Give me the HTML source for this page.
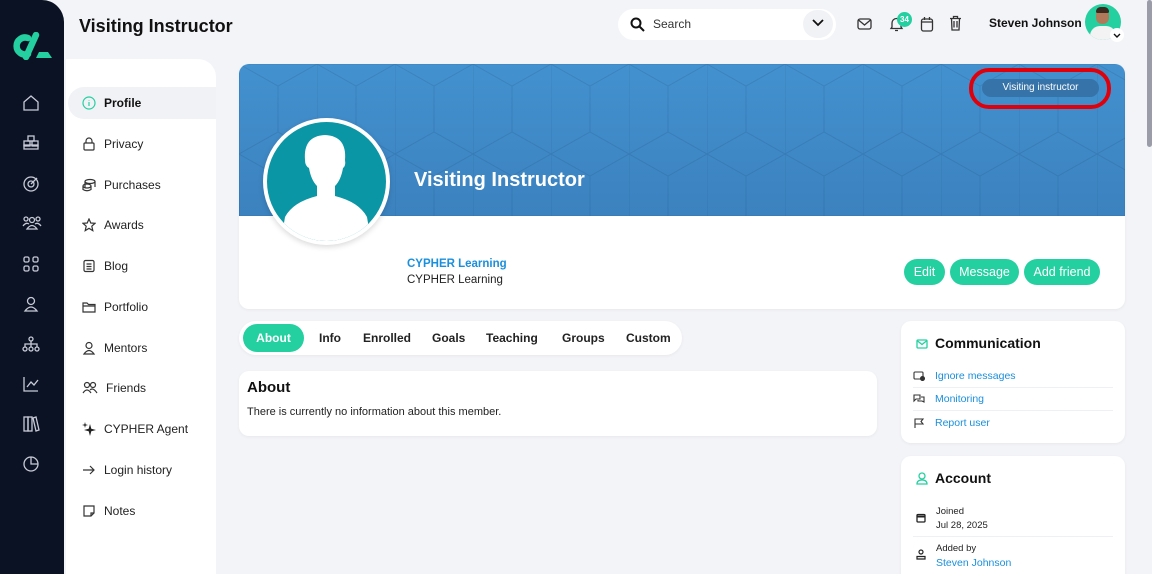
<!DOCTYPE html>
<html><head><meta charset="utf-8"><style>
*{box-sizing:border-box;margin:0;padding:0}
html,body{width:1152px;height:574px;overflow:hidden}
body{background:#f3f4f8;font-family:"Liberation Sans",sans-serif;color:#111;position:relative}
.abs{position:absolute}
.side{left:0;top:0;width:64px;height:574px;background:#0b1224;border-top-right-radius:22px}
.side svg{position:absolute;left:22px}
.nav{left:66px;top:59px;width:150px;height:515px;background:#fff;border-top-right-radius:18px}
.ni{position:absolute;left:2px;width:148px;height:32px;display:flex;align-items:center;padding-left:14px;font-size:12px;color:#222}
.ni svg{margin-right:8px}
.ni.act{background:#f1f2f6;border-radius:16px 0 0 16px;font-weight:bold;color:#111}
.card{background:#fff;border-radius:10px;box-shadow:0 1px 3px rgba(0,0,0,.05)}
.btn{position:absolute;top:259px;height:26px;border-radius:13px;background:#25d0a0;color:#fff;font-size:12.5px;display:flex;align-items:center;justify-content:center}
.tab{position:absolute;top:331px;font-size:12px;font-weight:bold;color:#222}
.lnk{color:#1a8fdc;font-size:10.5px}
.row{position:absolute;left:12px;right:12px;display:flex;align-items:center;height:23px;border-bottom:1px solid #eef0f4}
.row svg{margin-right:10px}
</style></head><body>
<div class="abs side">
 <svg style="left:11px;top:32px" width="42" height="28" viewBox="0 0 42 28"><path d="M17 6 A8.5 8.5 0 1 0 17 22" stroke="#25d0a0" stroke-width="6.5" fill="none" stroke-linecap="round"/><path d="M25 3 L15 25" stroke="#25d0a0" stroke-width="6.5" stroke-linecap="round"/><path d="M25 26 L41 26 L37 20 L28 20Z" fill="#25d0a0"/></svg>
 <svg style="top:95px" width="18" height="16" viewBox="0 0 18 16" fill="none" stroke="#c8cbd6" stroke-width="1.3"><path d="M2 7 L9 1 L16 7 V15 H2Z"/></svg>
 <svg style="top:135px" width="18" height="16" viewBox="0 0 18 16" fill="none" stroke="#c8cbd6" stroke-width="1.3"><rect x="6" y="1" width="6" height="5"/><rect x="2" y="6" width="6" height="5"/><rect x="10" y="6" width="6" height="5"/><rect x="2" y="10" width="14" height="4"/></svg>
 <svg style="top:175px" width="18" height="18" viewBox="0 0 18 18" fill="none" stroke="#c8cbd6" stroke-width="1.3"><circle cx="9" cy="9" r="7"/><circle cx="9" cy="9" r="3"/><path d="M9 9 L15 3"/></svg>
 <svg style="top:215px" width="20" height="16" viewBox="0 0 20 16" fill="none" stroke="#c8cbd6" stroke-width="1.3"><circle cx="10" cy="5" r="2.5"/><circle cx="4" cy="4" r="2"/><circle cx="16" cy="4" r="2"/><path d="M5 14 Q10 7 15 14Z M1 11 Q4 7 7 9 M19 11 Q16 7 13 9"/></svg>
 <svg style="top:255px" width="18" height="18" viewBox="0 0 18 18" fill="none" stroke="#c8cbd6" stroke-width="1.3"><rect x="2" y="2" width="5" height="5" rx="1.5"/><rect x="11" y="2" width="5" height="5" rx="1.5"/><rect x="2" y="11" width="5" height="5" rx="1.5"/><rect x="11" y="11" width="5" height="5" rx="1.5"/></svg>
 <svg style="top:295px" width="18" height="18" viewBox="0 0 18 18" fill="none" stroke="#c8cbd6" stroke-width="1.3"><circle cx="9" cy="6" r="3.5"/><path d="M3 16 Q9 8 15 16Z"/></svg>
 <svg style="top:335px" width="18" height="18" viewBox="0 0 18 18" fill="none" stroke="#c8cbd6" stroke-width="1.3"><circle cx="9" cy="4" r="2"/><circle cx="3" cy="14" r="2"/><circle cx="9" cy="14" r="2"/><circle cx="15" cy="14" r="2"/><path d="M9 6 V12 M3 12 V9 H15 V12"/></svg>
 <svg style="top:375px" width="18" height="18" viewBox="0 0 18 18" fill="none" stroke="#c8cbd6" stroke-width="1.3"><path d="M2 2 V16 H16 M5 12 L9 7 L12 10 L16 5"/></svg>
 <svg style="top:415px" width="18" height="18" viewBox="0 0 18 18" fill="none" stroke="#c8cbd6" stroke-width="1.3"><rect x="2" y="2" width="4" height="14"/><rect x="6" y="2" width="4" height="14"/><path d="M11 3 L14 2 L17 15 L14 16Z"/></svg>
 <svg style="top:455px" width="18" height="18" viewBox="0 0 18 18" fill="none" stroke="#c8cbd6" stroke-width="1.3"><circle cx="9" cy="9" r="7"/><path d="M9 2 V9 H16"/></svg>
</div>
<div class="abs" style="left:79px;top:16px;font-size:18px;font-weight:bold">Visiting Instructor</div>
<div class="abs nav">
 <div class="ni act" style="top:28px"><svg width="14" height="14" viewBox="0 0 14 14" fill="none" stroke="#25d0a0" stroke-width="1.2"><circle cx="7" cy="7" r="6"/><path d="M7 6 V10 M7 4 V4.5"/></svg>Profile</div>
 <div class="ni" style="top:69px"><svg width="14" height="14" viewBox="0 0 14 14" fill="none" stroke="#333" stroke-width="1.2"><rect x="2" y="6" width="10" height="7" rx="1"/><path d="M4 6 V4 A3 3 0 0 1 10 4 V6"/></svg>Privacy</div>
 <div class="ni" style="top:110px"><svg width="14" height="14" viewBox="0 0 14 14" fill="none" stroke="#333" stroke-width="1.2"><ellipse cx="8" cy="3.5" rx="5" ry="2"/><path d="M3 3.5 V10 M13 3.5V9"/><ellipse cx="5" cy="8" rx="4" ry="2"/><path d="M1 8 V11.5 Q5 14 9 11.5 V8"/></svg>Purchases</div>
 <div class="ni" style="top:150px"><svg width="14" height="14" viewBox="0 0 14 14" fill="none" stroke="#333" stroke-width="1.2"><path d="M7 1 L8.8 5 L13 5.3 L9.8 8.2 L10.8 12.6 L7 10.3 L3.2 12.6 L4.2 8.2 L1 5.3 L5.2 5Z"/></svg>Awards</div>
 <div class="ni" style="top:191px"><svg width="14" height="14" viewBox="0 0 14 14" fill="none" stroke="#333" stroke-width="1.2"><rect x="2" y="1.5" width="10" height="11" rx="1.5"/><path d="M4.5 5H9.5M4.5 7.5H9.5M4.5 10H9.5"/></svg>Blog</div>
 <div class="ni" style="top:232px"><svg width="14" height="14" viewBox="0 0 14 14" fill="none" stroke="#333" stroke-width="1.2"><path d="M1 3 H5 L6.5 4.5 H13 V12 H1Z M1 6 H13"/></svg>Portfolio</div>
 <div class="ni" style="top:273px"><svg width="14" height="14" viewBox="0 0 14 14" fill="none" stroke="#333" stroke-width="1.2"><circle cx="7" cy="4.5" r="3"/><path d="M2 13 Q7 6 12 13Z"/></svg>Mentors</div>
 <div class="ni" style="top:313px"><svg width="16" height="14" viewBox="0 0 16 14" fill="none" stroke="#333" stroke-width="1.2"><circle cx="5" cy="4" r="2.5"/><circle cx="11" cy="4" r="2.5"/><path d="M1 12 Q5 6 9 12 M8 9 Q11 6 15 12"/></svg>Friends</div>
 <div class="ni" style="top:354px"><svg width="14" height="14" viewBox="0 0 14 14" fill="#222"><path d="M8 2 L9.3 6.7 L14 8 L9.3 9.3 L8 14 L6.7 9.3 L2 8 L6.7 6.7Z"/><path d="M3 0 L3.6 2.4 L6 3 L3.6 3.6 L3 6 L2.4 3.6 L0 3 L2.4 2.4Z"/></svg>CYPHER Agent</div>
 <div class="ni" style="top:395px"><svg width="14" height="14" viewBox="0 0 14 14" fill="none" stroke="#333" stroke-width="1.2"><path d="M1 7 H12 M8 3 L12 7 L8 11"/></svg>Login history</div>
 <div class="ni" style="top:436px"><svg width="14" height="14" viewBox="0 0 14 14" fill="none" stroke="#333" stroke-width="1.2"><path d="M2 2 H12 V9 L9 12 H2Z M9 12 V9 H12"/></svg>Notes</div>
</div>
<!-- top bar -->
<div class="abs" style="left:618px;top:9px;width:218px;height:31px;background:#fff;border-radius:16px"></div>
<svg class="abs" style="left:630px;top:17px" width="15" height="15" viewBox="0 0 15 15" fill="none" stroke="#111" stroke-width="2"><circle cx="6" cy="6" r="4.5"/><path d="M9.5 9.5 L14 14"/></svg>
<div class="abs" style="left:653px;top:17px;font-size:12px;color:#333">Search</div>
<div class="abs" style="left:803px;top:10px;width:30px;height:28px;border-radius:14px;background:#f1f2f6"></div>
<svg class="abs" style="left:812px;top:19px" width="12" height="8" viewBox="0 0 12 8" fill="none" stroke="#111" stroke-width="1.8"><path d="M1 1 L6 6 L11 1"/></svg>
<svg class="abs" style="left:857px;top:18px" width="15" height="12" viewBox="0 0 15 12" fill="none" stroke="#333" stroke-width="1.3"><rect x="1" y="1" width="13" height="10" rx="2"/><path d="M1.5 2 L7.5 7 L13.5 2"/></svg>
<svg class="abs" style="left:889px;top:16px" width="15" height="16" viewBox="0 0 15 16" fill="none" stroke="#333" stroke-width="1.3"><path d="M3 11 V7 A4.5 4.5 0 0 1 12 7 V11 L13 12.5 H2Z M6 14.5 H9"/></svg>
<div class="abs" style="left:897px;top:12px;width:15px;height:15px;border-radius:50%;background:#25d0a0;color:#fff;font-size:8px;font-weight:bold;text-align:center;line-height:15px">34</div>
<svg class="abs" style="left:920px;top:16px" width="14" height="16" viewBox="0 0 14 16" fill="none" stroke="#333" stroke-width="1.3"><rect x="1.5" y="3" width="11" height="12" rx="2"/><path d="M1.5 6 H12.5 M4.5 1 V4 M9.5 1 V4"/></svg>
<svg class="abs" style="left:949px;top:15px" width="13" height="16" viewBox="0 0 13 16" fill="none" stroke="#333" stroke-width="1.3"><path d="M1 3.5 H12 M4.5 3.5 V1.5 H8.5 V3.5 M2.5 3.5 L3 15 H10 L10.5 3.5 M5 6 V12.5 M8 6 V12.5"/></svg>
<div class="abs" style="left:989px;top:16px;font-size:12px;font-weight:bold">Steven Johnson</div>
<div class="abs" style="left:1085px;top:4px;width:36px;height:36px;border-radius:50%;background:#25d0a0;overflow:hidden"><div style="position:absolute;left:11px;top:5px;width:13px;height:15px;border-radius:6px;background:#b07a5a"></div><div style="position:absolute;left:11px;top:3px;width:13px;height:6px;border-radius:6px 6px 2px 2px;background:#3a2a20"></div><div style="position:absolute;left:5px;top:22px;width:26px;height:20px;border-radius:10px 10px 0 0;background:#f3f3f3"></div></div>
<div class="abs" style="left:1110px;top:28px;width:14px;height:14px;border-radius:50%;background:#fff"></div>
<svg class="abs" style="left:1113px;top:33px" width="8" height="5" viewBox="0 0 8 5" fill="none" stroke="#111" stroke-width="1.4"><path d="M1 1 L4 4 L7 1"/></svg>
<!-- profile card -->
<div class="abs card" style="left:239px;top:64px;width:886px;height:245px;overflow:hidden">
 <div style="position:absolute;left:0;top:0;width:886px;height:152px;background:linear-gradient(#4391cf,#3b82bf)">
  <svg width="886" height="152" style="position:absolute;left:0;top:0" fill="none" stroke="rgba(20,60,110,.16)" stroke-width="1">
   <defs><pattern id="p" width="78" height="90" patternUnits="userSpaceOnUse"><path d="M0 0 L39 22 L78 0 M39 22 V68 M0 90 L39 68 L78 90 M0 0 V90"/></pattern></defs>
   <rect width="886" height="152" fill="url(#p)"/>
  </svg>
 </div>
 <div style="position:absolute;left:175px;top:105px;color:#fff;font-size:20px;font-weight:bold">Visiting Instructor</div>
 <div style="position:absolute;left:168px;top:194px;color:#1a8fdc;font-size:11.5px;font-weight:bold">CYPHER Learning</div>
 <div style="position:absolute;left:168px;top:210px;font-size:11.5px;color:#222">CYPHER Learning</div>
</div>
<div class="abs" style="left:969px;top:68px;width:142px;height:41px;border:4px solid #e0000c;border-radius:20px"></div>
<div class="abs" style="left:982px;top:79px;width:117px;height:18px;border-radius:9px;background:#3673a8;color:#fff;font-size:10px;text-align:center;line-height:18px">Visiting instructor</div>
<div class="abs" style="left:263px;top:118px;width:127px;height:127px;border-radius:50%;background:#fff;box-shadow:0 2px 6px rgba(0,0,0,.15)"></div>
<div class="abs" style="left:267px;top:122px;width:119px;height:119px;border-radius:50%;background:#0a96a4;overflow:hidden">
 <svg width="119" height="119" viewBox="0 0 119 119"><path d="M38 38 Q36 14 58 13 Q80 14 78 38 Q79 44 76 46 Q74 58 68 64 V74 Q92 80 100 95 L104 119 H14 L18 95 Q26 80 50 74 V64 Q44 58 42 46 Q38 44 38 38Z" fill="#fff"/></svg>
</div>
<div class="btn" style="left:904px;width:41px">Edit</div>
<div class="btn" style="left:950px;width:69px">Message</div>
<div class="btn" style="left:1024px;width:76px">Add friend</div>
<!-- tabs -->
<div class="abs" style="left:239px;top:321px;width:443px;height:34px;background:#fff;border-radius:17px;box-shadow:0 1px 3px rgba(0,0,0,.05)"></div>
<div class="abs" style="left:243px;top:324px;width:61px;height:28px;border-radius:14px;background:#25d0a0;color:#fff;font-size:12px;font-weight:bold;text-align:center;line-height:28px">About</div>
<div class="tab" style="left:319px">Info</div>
<div class="tab" style="left:363px">Enrolled</div>
<div class="tab" style="left:432px">Goals</div>
<div class="tab" style="left:486px">Teaching</div>
<div class="tab" style="left:562px">Groups</div>
<div class="tab" style="left:626px">Custom</div>
<div class="abs card" style="left:239px;top:371px;width:638px;height:65px">
 <div style="position:absolute;left:8px;top:8px;font-size:15px;font-weight:bold">About</div>
 <div style="position:absolute;left:8px;top:35px;font-size:11px;color:#222">There is currently no information about this member.</div>
</div>
<!-- right -->
<div class="abs card" style="left:901px;top:321px;width:224px;height:122px">
 <svg style="position:absolute;left:15px;top:18px" width="12" height="10" viewBox="0 0 12 10" fill="none" stroke="#25d0a0" stroke-width="1.3"><rect x="1" y="1" width="10" height="8" rx="1"/><path d="M1 1.5 L6 5.5 L11 1.5"/></svg>
 <div style="position:absolute;left:34px;top:14px;font-size:14px;font-weight:bold">Communication</div>
 <div class="row" style="top:44px"><svg width="12" height="10" viewBox="0 0 12 10" fill="none" stroke="#333" stroke-width="1.1"><rect x="1" y="1" width="9" height="7" rx="1"/><circle cx="9.5" cy="7.5" r="2" fill="#333"/></svg><span class="lnk">Ignore messages</span></div>
 <div class="row" style="top:67px"><svg width="12" height="10" viewBox="0 0 12 10" fill="none" stroke="#333" stroke-width="1.1"><path d="M1 1 H7 V5 H3 L1 7Z M8 3 H11 V8 L9 7 H5 V6"/></svg><span class="lnk">Monitoring</span></div>
 <div class="row" style="top:90px;border:none"><svg width="12" height="10" viewBox="0 0 12 10" fill="none" stroke="#333" stroke-width="1.1"><path d="M2 10 V1 H10 L8 3.5 L10 6 H2"/></svg><span class="lnk">Report user</span></div>
</div>
<div class="abs card" style="left:901px;top:456px;width:224px;height:130px">
 <svg style="position:absolute;left:15px;top:16px" width="12" height="13" viewBox="0 0 12 13" fill="none" stroke="#25d0a0" stroke-width="1.3"><circle cx="6" cy="4" r="3"/><path d="M1 12 Q1 8 6 8 Q11 8 11 12Z"/></svg>
 <div style="position:absolute;left:34px;top:14px;font-size:14px;font-weight:bold">Account</div>
 <svg style="position:absolute;left:15px;top:57px" width="10" height="10" viewBox="0 0 10 10" fill="none" stroke="#222" stroke-width="1.3"><rect x="1" y="1.5" width="8" height="7.5" rx="1"/><path d="M1 3.5 H9" stroke-width="2"/></svg>
 <div style="position:absolute;left:35px;top:49px;font-size:9.5px;color:#222;line-height:14px">Joined<br>Jul 28, 2025</div>
 <div style="position:absolute;left:12px;right:12px;top:80px;border-top:1px solid #eef0f4"></div>
 <svg style="position:absolute;left:15px;top:93px" width="10" height="11" viewBox="0 0 10 11" fill="none" stroke="#222" stroke-width="1.2"><circle cx="5" cy="3" r="2"/><path d="M1 10 V7.5 H9 V10Z"/></svg>
 <div style="position:absolute;left:35px;top:86px;font-size:9.5px;color:#222;line-height:14px">Added by<br><span class="lnk">Steven Johnson</span></div>
</div>
<div class="abs" style="left:1146px;top:0;width:6px;height:574px;background:#f3f4f8"></div>
<div class="abs" style="left:1147px;top:0;width:5px;height:147px;background:#9a9ca8;border-radius:3px"></div>
</body></html>
